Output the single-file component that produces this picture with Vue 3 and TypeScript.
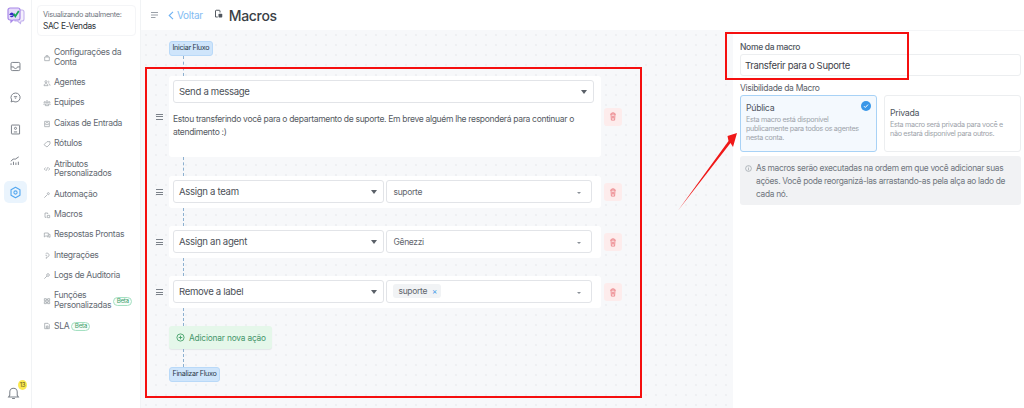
<script setup lang="ts">
interface NavItem { lines: string[]; icon: string; beta?: boolean }
const nav: NavItem[] = [
  { lines: ['Configurações da', 'Conta'], icon: 'M2.500 4.500h7v5.500h-7zM4.500 4.500V2.500h3v2' },
  { lines: ['Agentes'], icon: 'M4.500 2.500a1.600 1.600 0 1 1 0 3.200 1.600 1.600 0 0 1 0-3.200zM1.500 10c0-2 1.400-3 3-3s3 1 3 3zM8 3a1.400 1.400 0 0 1 0 2.700M8.600 7c1.200.3 2 1.300 2 3' },
  { lines: ['Equipes'], icon: 'M6 2.500a1.500 1.500 0 1 1 0 3 1.500 1.500 0 0 1 0-3zM2.500 4a1 1 0 1 1 0 2 1 1 0 0 1 0-2zM9.500 4a1 1 0 1 1 0 2 1 1 0 0 1 0-2zM3.500 10V7.500h5V10zM1.500 9V7M10.500 9V7' },
  { lines: ['Caixas de Entrada'], icon: 'M2.500 2h7v8h-7zM2.500 6h2l.7 1h1.600l.7-1h2M4.500 4h3' },
  { lines: ['Rótulos'], icon: 'M1.500 7l4.500-4.500h4.500V6L6 10.500z' },
  { lines: ['Atributos', 'Personalizados'], icon: 'M4 4L1.800 6 4 8M8 4l2.200 2L8 8M6.800 3.500L5.200 8.500' },
  { lines: ['Automação'], icon: 'M2 10l4-4M8 2.500a1.500 1.500 0 1 1 0 3 1.500 1.500 0 0 1 0-3z' },
  { lines: ['Macros'], icon: 'M3 7V3h4v1.500M3 7v2.500h2M6.500 6.500h3.500v3.500H6.500z' },
  { lines: ['Respostas Prontas'], icon: 'M2 3h6v4.500H4L2 9zM9 5h1.500v4.500L9 8.700H6' },
  { lines: ['Integrações'], icon: 'M4 2.500a3 3 0 1 1 2 5.200H5v2.500M3.800 5h2.400' },
  { lines: ['Logs de Auditoria'], icon: 'M7.500 2.500a2 2 0 1 1 0 4 2 2 0 0 1 0-4zM6 6l-4 4' },
  { lines: ['Funções', 'Personalizadas'], icon: 'M2 2.500h3v3H2zM7 2.500h3v3H7zM2 7h3v3H2zM7 7h3v3H7zM5 4h2M5 8.500h2', beta: true },
  { lines: ['SLA'], icon: 'M2.500 2h5l2 2v6h-7zM5 6h2.500v3H5z', beta: true },
]
const rail = [
  'M4 3h8a1.500 1.500 0 0 1 1.500 1.500v7A1.500 1.500 0 0 1 12 13H4a1.500 1.500 0 0 1-1.500-1.500v-7A1.500 1.500 0 0 1 4 3zM2.500 8.500h3.200C6 10 7 10.500 8 10.500s2-.5 2.300-2h3.200',
  'M8 2.500a5.500 5.500 0 1 1-3 10L2.500 13.500l.8-2.500A5.500 5.500 0 0 1 8 2.500zM6 7h4M7.200 8.800h1.600',
  'M3.500 2.500h9a.5.5 0 0 1 .5.500v10.500H3.500a.5.5 0 0 1-.5-.5V3a.5.5 0 0 1 .5-.5zM6 11h4M8 5.300a1.300 1.300 0 1 1 0 2.600A1.300 1.300 0 0 1 8 5.300z',
  'M2.500 13.500v-2M5.500 13.500v-4M8.500 13.500v-3M11.500 13.500v-4M2.500 9C4 6.500 6 5.500 7.500 6.500L12 3.500',
]
interface Row { action: string; value?: string; tag?: string }
const rows: Row[] = [
  { action: 'Assign a team', value: 'suporte' },
  { action: 'Assign an agent', value: 'Gênezzi' },
  { action: 'Remove a label', tag: 'suporte' },
]
</script>

<template>
  <div class="page">
    <aside class="rail">
      <div class="logo">
        <svg width="18" height="18" viewBox="0 0 18 18">
          <path d="M8 3h7a2 2 0 0 1 2 2v7a2 2 0 0 1-2 2h-1l-.5 2.500L10.500 14H8z" fill="#f4f0fc" stroke="#c3b2ee" stroke-width="1.100" />
          <path d="M3 1h8a2 2 0 0 1 2 2v8a2 2 0 0 1-2 2H6l-2 2v-2H3a2 2 0 0 1-2-2V3a2 2 0 0 1 2-2z" fill="#e6dbfa" stroke="#a787e8" stroke-width="1.200" />
          <path d="M6.300 7.200H3.300a1.600 1.600 0 1 1 .2 1.600" fill="none" stroke="#3b2bc4" stroke-width="1.400" />
          <path d="M6.800 6.800l1.500 2.500L11.800 4" fill="none" stroke="#18a558" stroke-width="1.700" />
        </svg>
      </div>
      <div class="rail-icons">
        <div v-for="(d, i) in rail" :key="i" class="rail-icon">
          <svg width="13" height="13" viewBox="0 0 16 16"><path :d="d" fill="none" stroke="#7b8189" stroke-width="1.200" stroke-linejoin="round" /></svg>
        </div>
        <div class="rail-icon active">
          <svg width="13" height="13" viewBox="0 0 16 16">
            <path d="M8 1.500l5.500 3.200v6.600L8 14.500l-5.500-3.200V4.700z" fill="none" stroke="#55a8f0" stroke-width="1.400" stroke-linejoin="round" />
            <circle cx="8" cy="8" r="2" fill="none" stroke="#55a8f0" stroke-width="1.300" />
          </svg>
        </div>
      </div>
      <div class="bell">
        <svg width="13" height="14" viewBox="0 0 14 15"><path d="M3 10V6.500a4 4 0 0 1 8 0V10l1.300 1.800H1.700zM5.500 13.500h3" fill="none" stroke="#7b8189" stroke-width="1.100" /></svg>
        <span class="count">13</span>
      </div>
    </aside>

    <nav class="side">
      <div class="account">
        <div class="acc-top">Visualizando atualmente:</div>
        <div class="acc-name">SAC E-Vendas</div>
      </div>
      <ul class="menu">
        <li v-for="item in nav" :key="item.lines[0]" class="item">
          <svg class="nav-ico" width="8" height="8" viewBox="0 0 12 12"><path :d="item.icon" fill="none" stroke="#93989f" stroke-width="1" /></svg>
          <span class="item-text"><span v-for="l in item.lines" :key="l" class="line">{{ l }}</span></span>
          <span v-if="item.beta" class="beta">Beta</span>
        </li>
      </ul>
    </nav>

    <div class="main">
      <header class="top">
        <svg class="burger" width="7" height="6" viewBox="0 0 7 6"><path d="M0 .500h7M0 3h7M0 5.500h4.500" stroke="#9aa0a8" stroke-width="1" /></svg>
        <span class="back"><svg width="6" height="9" viewBox="0 0 6 9"><path d="M5 .800L1.200 4.500 5 8.200" fill="none" stroke="#6db0f2" stroke-width="1.100" /></svg>Voltar</span>
        <svg class="title-ico" width="9" height="10" viewBox="0 0 12 13"><path d="M2 6.500V2.500a1 1 0 0 1 1-1h4a1 1 0 0 1 1 1v2M2 6.500v4h3" fill="none" stroke="#50565e" stroke-width="1.300" /><rect x="6" y="6" width="5" height="5" rx="1" fill="#50565e" /></svg>
        <h1 class="title">Macros</h1>
      </header>
      <div class="work">
        <section class="canvas">
          <span class="pill">Iniciar Fluxo</span>
          <div class="link h24"></div>
          <div class="node">
            <span class="grip"><i></i><i></i><i></i></span>
            <div class="card first">
              <div class="sel full"><span>Send a message</span><b class="caret"></b></div>
              <p class="msg">Estou transferindo você para o departamento de suporte. Em breve alguém lhe responderá para continuar o atendimento :)</p>
            </div>
            <button class="del"><svg width="8" height="9" viewBox="0 0 10 11"><path d="M1.500 2.500h7M3.500 2.500V1h3v1.500M2.500 2.500l.5 7.500h4l.5-7.500M4.200 4.500v3.500M5.800 4.500v3.500" fill="none" stroke="#ea7a80" stroke-width="1" /></svg></button>
          </div>
          <div class="link h19"></div>
          <template v-for="r in rows" :key="r.action">
            <div class="node">
              <span class="grip"><i></i><i></i><i></i></span>
              <div class="card">
                <div class="row">
                  <div class="sel act"><span>{{ r.action }}</span><b class="caret"></b></div>
                  <div class="sel val">
                    <span v-if="r.value" class="val-text">{{ r.value }}</span>
                    <span v-else class="tag">{{ r.tag }}<em>×</em></span>
                    <b class="mini"></b>
                  </div>
                </div>
              </div>
              <button class="del"><svg width="8" height="9" viewBox="0 0 10 11"><path d="M1.500 2.500h7M3.500 2.500V1h3v1.500M2.500 2.500l.5 7.500h4l.5-7.500M4.200 4.500v3.500M5.800 4.500v3.500" fill="none" stroke="#ea7a80" stroke-width="1" /></svg></button>
            </div>
            <div class="link h18"></div>
          </template>
          <button class="add">
            <svg width="9" height="9" viewBox="0 0 10 10"><circle cx="5" cy="5" r="4" fill="none" stroke="#45a06a" stroke-width="1" /><path d="M3 5h4M5 3v4" stroke="#45a06a" stroke-width="1" /></svg>
            Adicionar nova ação
          </button>
          <div class="link h18"></div>
          <span class="pill">Finalizar Fluxo</span>
        </section>

        <aside class="panel">
          <label class="lab-name">Nome da macro</label>
          <div class="input">Transferir para o Suporte</div>
          <div class="lab-vis">Visibilidade da Macro</div>
          <div class="choices">
            <div class="choice on">
              <span class="check"><svg width="6" height="6" viewBox="0 0 6 6"><path d="M1 3.200l1.300 1.300L5 1.600" fill="none" stroke="#fff" stroke-width="1" /></svg></span>
              <div class="c-title">Pública</div>
              <div class="c-text">Esta macro está disponível<br />publicamente para todos os agentes<br />nesta conta.</div>
            </div>
            <div class="choice">
              <div class="c-title">Privada</div>
              <div class="c-text">Esta macro será privada para você e<br />não estará disponível para outros.</div>
            </div>
          </div>
          <div class="info">
            <svg class="info-ico" width="7" height="7" viewBox="0 0 8 8"><circle cx="4" cy="4" r="3.300" fill="none" stroke="#9aa0a8" stroke-width=".8" /><path d="M4 3.500v2.500M4 2v.8" stroke="#9aa0a8" stroke-width=".8" /></svg>
            <p>As macros serão executadas na ordem em que você adicionar suas ações. Você pode reorganizá-las arrastando-as pela alça ao lado de cada nó.</p>
          </div>
        </aside>
      </div>
    </div>

    <div class="mark mark-flow"></div>
    <div class="mark mark-name"></div>
    <svg class="arrow" width="60" height="100" viewBox="0 0 60 100">
      <path d="M1 98.500L51.500 29l-1-5 9.500-3-4 14-2.500-4z" fill="#f01818" />
    </svg>
  </div>
</template>

<style>
html, body { margin: 0; background: #fff; }
</style>

<style scoped>
.page { position: relative; width: 1024px; height: 408px; display: flex; overflow: hidden; background: #fff; color: #3c4148; font-family: Inter, "Noto Sans", sans-serif; letter-spacing: -0.02em; }
.rail { width: 32px; box-sizing: border-box; border-right: 1px solid #f1f3f5; display: flex; flex-direction: column; align-items: center; flex: none; }
.logo { height: 18px; margin-top: 7px; }
.rail-icons { display: flex; flex-direction: column; gap: 9.500px; margin-top: 30px; align-items: center; }
.rail-icon { width: 23px; height: 22px; display: flex; align-items: center; justify-content: center; }
.rail-icon.active { background: #eaf4fd; border-radius: 5px; }
.bell { position: relative; margin-top: auto; margin-bottom: 10px; margin-right: 4px; height: 14px; }
.count { position: absolute; left: 11px; top: -4px; width: 9px; height: 10px; border-radius: 50%; background: #fbe94f; color: #5a5520; font-size: 6px; line-height: 10px; text-align: center; }

.side { width: 109px; flex: none; box-sizing: border-box; border-right: 1px solid #f1f3f5; padding: 5px 4px 0 5px; }
.account { width: 99px; box-sizing: border-box; height: 31px; border: 1px solid #f4f5f7; border-radius: 4px; padding: 4px 5px; }
.acc-top { font-size: 7.300px; line-height: 10px; color: #70767e; white-space: nowrap; }
.acc-name { font-size: 8.300px; line-height: 12px; color: #2e3238; }
.menu { list-style: none; margin: 12px 0 0; padding: 0 0 0 6px; display: flex; flex-direction: column; gap: 10.400px; }
.item { display: flex; align-items: center; min-height: 10px; font-size: 8.600px; line-height: 9.800px; color: #646a72; }
.nav-ico { flex: none; margin-right: 3px; }
.line { display: block; white-space: nowrap; }
.beta { margin-left: 2px; border: 1.500px solid #a5e0c2; border-radius: 5px; font-size: 6.300px; line-height: 7px; padding: 0 2.500px; color: #3e9d6a; background: #f6fdf9; }

.main { flex: 1; min-width: 0; display: flex; flex-direction: column; }
.top { height: 30px; box-sizing: border-box; display: flex; align-items: center; padding: 0 0 0 10px; flex: none; }
.burger { margin-right: 10px; }
.back { display: inline-flex; align-items: center; gap: 3px; font-size: 10px; color: #82bcf3; margin-right: 11px; }
.title-ico { margin-right: 6px; margin-bottom: 3px; }
.title { font-size: 14px; font-weight: 500; margin: 0; color: #3a3f46; }
.work { flex: 1; display: flex; min-height: 0; }
.canvas { width: 592px; flex: none; box-sizing: border-box; padding: 11px 0 0 28px; background-color: #f7f8fa; background-image: radial-gradient(circle, #e3e6ea 0.6px, transparent 0.8px); background-size: 10px 10px; display: flex; flex-direction: column; align-items: flex-start; }
.pill { font-size: 7.200px; line-height: 12px; height: 13px; padding: 0 2.500px; background: #cfe5fb; border: 1px solid #b9d9f8; border-radius: 3px; color: #2d3a4a; white-space: nowrap; }
.link { width: 0; margin-left: 14px; border-left: 1px dashed #8cb0d0; }
.h24 { height: 20px; }
.h19 { height: 19px; }
.h18 { height: 18px; }
.node { position: relative; width: 432px; }
.grip { position: absolute; left: -13px; top: 50%; margin-top: -3px; width: 7px; display: flex; flex-direction: column; gap: 1.500px; }
.grip i { display: block; height: 1px; background: #7b8189; }
.card { width: 432px; box-sizing: border-box; background: #fff; border-radius: 3px; padding: 4px 9px 5px 4px; }
.card.first { padding: 4px 7px 0 4px; height: 81px; }
.sel { height: 23px; box-sizing: border-box; background: #fff; border: 1px solid #e2e4e8; border-radius: 3px; display: flex; align-items: center; justify-content: space-between; padding: 0 5px; font-size: 9.600px; color: #4c5158; }
.full { width: 421px; }
.msg { margin: 10px 0 0; font-size: 8.530px; line-height: 12.500px; color: #555a62; }
.row { display: flex; gap: 2px; }
.act { width: 212px; }
.val { width: 206px; padding-left: 6px; }
.val-text { font-size: 8.500px; color: #5f656d; }
.caret { width: 0; height: 0; border-left: 3px solid transparent; border-right: 3px solid transparent; border-top: 4px solid #5a6068; margin-right: 1px; }
.mini { width: 0; height: 0; border-left: 2.500px solid transparent; border-right: 2.500px solid transparent; border-top: 2px solid #8a9098; margin-right: 5px; margin-top: 2px; }
.tag { display: inline-flex; align-items: center; gap: 5px; height: 14px; padding: 0 4px 0 5px; background: #f1f3f5; border-radius: 3px; font-size: 8.500px; color: #5f656d; margin-top: -2px; }
.tag em { font-style: normal; color: #3a97e8; font-size: 8px; }
.del { position: absolute; left: 435px; top: 50%; margin-top: -9px; width: 18px; height: 18px; border: 0; padding: 0; background: #fdecec; border-radius: 3px; display: flex; align-items: center; justify-content: center; }
.add { height: 23px; width: 103px; border: 0; border-radius: 3px; background: #e5f7ea; box-shadow: 0 1px 1px #e3e6e8; display: flex; align-items: center; gap: 4px; padding: 0 0 0 7px; font: inherit; font-size: 8.300px; letter-spacing: -0.02em; color: #45966a; white-space: nowrap; }

.panel { flex: 1; min-width: 0; box-sizing: border-box; padding: 11px 3px 0 7px; background: #fff; border-top: 1px solid #f4f5f7; }
.lab-name { display: block; font-size: 8.500px; line-height: 10px; color: #50565e; font-weight: 500; }
.input { margin-top: 2px; height: 22px; box-sizing: border-box; border: 1px solid #eceef0; border-radius: 3px; padding: 0 4px; font-size: 9.500px; line-height: 21px; color: #3c4148; }
.lab-vis { margin-top: 7px; font-size: 8.500px; line-height: 10px; color: #5a6068; }
.choices { display: flex; gap: 7px; margin-top: 2px; }
.choice { position: relative; flex: 1; height: 57px; box-sizing: border-box; border: 1px solid #eceef0; border-radius: 3px; padding: 11px 5px 0; }
.choice.on { background: #f4f9fe; border-color: #a8d2f6; padding-top: 6px; }
.check { position: absolute; right: 5px; top: 5px; width: 10px; height: 10px; border-radius: 50%; background: #3a97e8; display: flex; align-items: center; justify-content: center; }
.c-title { font-size: 8.800px; line-height: 11px; color: #50565e; }
.c-text { margin-top: 2px; font-size: 7.200px; line-height: 9px; color: #9da3aa; white-space: nowrap; }
.info { margin-top: 4px; height: 49px; box-sizing: border-box; background: #f1f2f4; border-radius: 3px; display: flex; padding: 6px 6px 0 5px; }
.info-ico { flex: none; margin: 3px 4px 0 0; }
.info p { margin: 0; font-size: 8.400px; line-height: 13px; color: #70767e; }

.mark { position: absolute; border: 2px solid #f50f0f; box-sizing: border-box; pointer-events: none; }
.mark-flow { left: 145px; top: 67px; width: 497px; height: 331px; }
.mark-name { left: 725px; top: 32px; width: 184px; height: 48px; }
.arrow { position: absolute; left: 677px; top: 112px; }
</style>
